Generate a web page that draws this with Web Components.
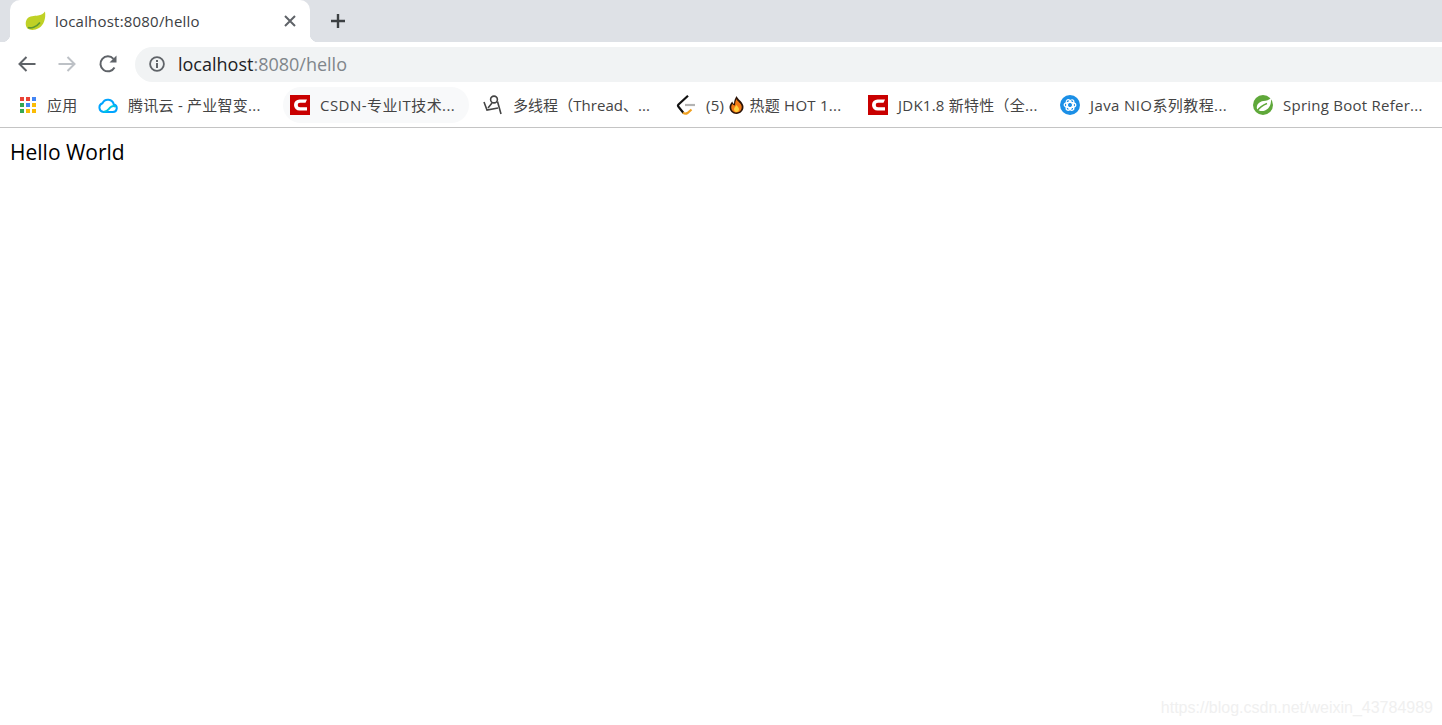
<!DOCTYPE html>
<html lang="zh">
<head>
<meta charset="utf-8">
<title>localhost:8080/hello</title>
<style>
  html, body { margin: 0; height: 100%; background: #fff; }
  body { font-family: "Open Sans", "Noto Sans CJK SC", sans-serif; overflow: hidden; }
  svg { display: block; }
</style>
</head>
<body>
<browser-window>
  <tab-strip title-text="localhost:8080/hello"></tab-strip>
  <nav-toolbar></nav-toolbar>
  <bookmark-bar>
    <bookmark-item style="width:79px">
      <svg slot="icon" width="18" height="18" viewBox="0 0 18 18">
        <rect x="1" y="1" width="4" height="4" fill="#ea4335"/><rect x="7" y="1" width="4" height="4" fill="#ea4335"/><rect x="13" y="1" width="4" height="4" fill="#4285f4"/>
        <rect x="1" y="7" width="4" height="4" fill="#34a853"/><rect x="7" y="7" width="4" height="4" fill="#4285f4"/><rect x="13" y="7" width="4" height="4" fill="#fbbc05"/>
        <rect x="1" y="13" width="4" height="4" fill="#34a853"/><rect x="7" y="13" width="4" height="4" fill="#fbbc05"/><rect x="13" y="13" width="4" height="4" fill="#fbbc05"/>
      </svg>
      应用
    </bookmark-item>
    <bookmark-item style="width:192px">
      <svg slot="icon" width="20" height="20" viewBox="0 0 20 20" fill="none" stroke-width="2">
        <path d="M5.500 17H15a3.800 3.800 0 0 0 .8-7.500 6 6 0 0 0-11.400-1.200A4.500 4.500 0 0 0 5.500 17z" stroke="#00a4ff"/>
        <path d="M5.500 17c3 0 4-1.500 6-3.800 1.800-2.200 4-2.700 6.200-1.500" stroke="#00c8e0"/>
      </svg>
      腾讯云 - 产业智变...
    </bookmark-item>
    <bookmark-item hovered style="width:186px;letter-spacing:.45px">
      <svg slot="icon" width="20" height="20" viewBox="0 0 20 20">
        <rect width="20" height="20" fill="#c90000"/>
        <path d="M17 4.500H9.500a5.500 5.500 0 0 0 0 11H17v-3.200h-7a2.300 2.300 0 0 1 0-4.600h5.500z" fill="#fff"/>
      </svg>
      CSDN-专业IT技术...
    </bookmark-item>
    <bookmark-item style="width:193px;margin-left:7px;letter-spacing:.05px">
      <svg slot="icon" width="20" height="20" viewBox="0 0 20 20" fill="none" stroke="#444" stroke-width="1.600">
        <circle cx="11" cy="4.500" r="3.400"/>
        <path d="M1 7l3 8 11-2M5 13l4-5M14.500 6.500 18 19"/>
      </svg>
      多线程（Thread、...
    </bookmark-item>
    <bookmark-item style="width:192px">
      <svg slot="icon" width="20" height="20" viewBox="0 0 20 20" fill="none" stroke-width="2.200">
        <path d="M12 .8 2.500 9.500a1.600 1.600 0 0 0 0 2.200L7.500 18" stroke="#111"/>
        <path d="M9 10h10" stroke="#b3b3b3"/>
        <path d="M7 17.500c1.500 1.500 3 1.500 4.500.5l4-3.500" stroke="#f0a020"/>
      </svg>
      (5) <svg width="15" height="18" viewBox="0 0 15 18" style="display:inline-block;vertical-align:-3px;margin:0 1px">
        <path d="M7.500 0c1 3 5.500 5 6.800 9.500C15.300 14 12 18 7.500 18S-.3 14 .7 9.800C1.300 7.800 2.500 6.500 3.300 5.500c.3 1.300.8 2 1.700 2.400C5 5 6 2.500 7.500 0z" fill="#2b1408"/>
        <path d="M7.500 3c.8 2.500 4.800 4 5.200 7.500.3 3-2 6-5.200 6s-5.700-2.600-5.200-6c.2-1 .6-1.900 1.200-2.700.5 1 1.300 1.500 2.500 1.700C6 7 6.500 5 7.500 3z" fill="#f47b16"/>
        <path d="M7.500 9c.8 1.500 2.500 2.200 2.500 4.200 0 1.600-1.100 2.800-2.500 2.800S5 14.800 5 13.200C5 11.300 6.700 10.500 7.500 9z" fill="#ffd23e"/>
      </svg> 热题 HOT 1...
    </bookmark-item>
    <bookmark-item style="width:192px">
      <svg slot="icon" width="20" height="20" viewBox="0 0 20 20">
        <rect width="20" height="20" fill="#c90000"/>
        <path d="M17 4.500H9.500a5.500 5.500 0 0 0 0 11H17v-3.200h-7a2.300 2.300 0 0 1 0-4.600h5.500z" fill="#fff"/>
      </svg>
      JDK1.8 新特性（全...
    </bookmark-item>
    <bookmark-item style="width:193px;letter-spacing:.4px">
      <svg slot="icon" width="20" height="20" viewBox="0 0 20 20">
        <circle cx="10" cy="10" r="10" fill="#1b8fe6"/>
        <g fill="none" stroke="#fff" stroke-width="1.300">
          <ellipse cx="10" cy="10" rx="5.800" ry="2.600"/>
          <ellipse cx="10" cy="10" rx="5.800" ry="2.600" transform="rotate(60 10 10)"/>
          <ellipse cx="10" cy="10" rx="5.800" ry="2.600" transform="rotate(120 10 10)"/>
        </g>
      </svg>
      Java NIO系列教程...
    </bookmark-item>
    <bookmark-item style="width:190px">
      <svg slot="icon" width="20" height="20" viewBox="0 0 20 20">
        <circle cx="10" cy="10" r="10" fill="#5fa83a"/>
        <path d="M18 3c.5 5-1 10.500-6 12.500-3 1.200-6.500.5-8-1.500C3 10 6 6.500 10.500 6c3-.3 5.500-1 7.500-3z" fill="#fff"/>
        <path d="M4 16c2.500-3.500 6-6 10-7.500" fill="none" stroke="#5fa83a" stroke-width="1.500"/>
      </svg>
      Spring Boot Refer...
    </bookmark-item>
  </bookmark-bar>
  <page-content>Hello World</page-content>
  <water-mark>https://blog.csdn.net/weixin_43784989</water-mark>
</browser-window>

<script>
class BrowserWindow extends HTMLElement {
  constructor() {
    super();
    this.attachShadow({ mode: "open" }).innerHTML = `
    <style>
      :host { display: flex; flex-direction: column; height: 725px; position: relative; overflow: hidden; }
    </style>
    <slot></slot>`;
  }
}

class TabStrip extends HTMLElement {
  constructor() {
    super();
    this.attachShadow({ mode: "open" });
  }

  connectedCallback() {
    this.shadowRoot.innerHTML = `
    <style>
      :host { display: flex; align-items: stretch; height: 42px; padding-left: 10px; background: #dee1e6; }
      .tab {
        position: relative;
        display: flex;
        align-items: center;
        width: 300px;
        box-sizing: border-box;
        padding: 0 14px 0 15px;
        background: #fff;
        border-radius: 10px 10px 0 0;
      }
      .tab::before, .tab::after {
        content: "";
        position: absolute;
        bottom: 0;
        width: 8px;
        height: 8px;
      }
      .tab::before { left: -8px; background: radial-gradient(circle at 0 0, transparent 8px, #fff 8.5px); }
      .tab::after { right: -8px; background: radial-gradient(circle at 100% 0, transparent 8px, #fff 8.5px); }
      .title { flex: 1; margin-left: 9px; font-size: 15px; letter-spacing: .2px; color: #3c4043; white-space: nowrap; }
      .plus { margin-left: 20px; align-self: center; }
    </style>
    <div class="tab">
      <svg width="21" height="20" viewBox="0 0 21 20">
        <path d="M20 .5C21 7 19 14 14 17c-4 2.500-9 2.500-11.500.5C.5 15 0 11 2 8c3-3.500 7-3 11-3.500 3-.5 5.500-1.500 7-4z" fill="#bfd125"/>
        <path d="M3 16.500c3 1 8 0 12-5" fill="none" stroke="#5e9a32" stroke-width="1.600"/>
      </svg>
      <span class="title">${this.getAttribute("title-text")}</span>
      <svg width="12" height="12" viewBox="0 0 12 12" stroke="#5f6368" stroke-width="2"><path d="M1 1l10 10M11 1 1 11"/></svg>
    </div>
    <svg class="plus" width="16" height="16" viewBox="0 0 16 16" stroke="#3c4043" stroke-width="2.400"><path d="M8 1v14M1 8h14"/></svg>`;
  }
}

class NavToolbar extends HTMLElement {
  constructor() {
    super();
    this.attachShadow({ mode: "open" }).innerHTML = `
    <style>
      :host { display: flex; align-items: center; height: 44px; padding-left: 17px; box-sizing: border-box; background: #fff; }
      .btn { flex: none; }
      .back { margin-right: 20px; }
      .fwd { margin-right: 21px; }
      .reload { margin-right: 17px; }
      .omni {
        flex: 1;
        display: flex;
        align-items: center;
        height: 35px;
        margin-right: -40px;
        padding-left: 14px;
        background: #f1f3f4;
        border-radius: 18px;
        font-size: 18px;
        color: #80868b;
      }
      .omni b { font-weight: 400; color: #202124; }
      .omni svg { margin-right: 13px; }
    </style>
    <svg class="btn back" width="20" height="18" viewBox="0 0 20 18" fill="none" stroke="#5f6368" stroke-width="2"><path d="M18.500 9H2.500M9.500 2l-7 7 7 7"/></svg>
    <svg class="btn fwd" width="20" height="18" viewBox="0 0 20 18" fill="none" stroke="#bdc1c6" stroke-width="2"><path d="M1.500 9h16M10.500 2l7 7-7 7"/></svg>
    <svg class="btn reload" width="20" height="20" viewBox="0 0 20 20" fill="none">
      <path d="M16.500 13.500A7.500 7.500 0 1 1 15.500 4.800" stroke="#5f6368" stroke-width="2"/>
      <path d="M18.500 1.500v7h-7z" fill="#5f6368"/>
    </svg>
    <div class="omni">
      <svg width="16" height="16" viewBox="0 0 16 16" fill="none">
        <circle cx="8" cy="8" r="6.900" stroke="#5f6368" stroke-width="1.800"/>
        <path d="M7 7h2v5H7zM7 4h2v2H7z" fill="#5f6368"/>
      </svg>
      <span><b>localhost</b>:8080/hello</span>
    </div>`;
  }
}

class BookmarkBar extends HTMLElement {
  constructor() {
    super();
    this.attachShadow({ mode: "open" }).innerHTML = `
    <style>
      :host { display: flex; align-items: center; height: 42px; box-sizing: border-box; padding: 0 0 4px 12px; background: #fff; border-bottom: 1px solid #c4c4c4; }
    </style>
    <slot></slot>`;
  }
}

class BookmarkItem extends HTMLElement {
  constructor() {
    super();
    this.attachShadow({ mode: "open" }).innerHTML = `
    <style>
      :host {
        display: flex;
        align-items: center;
        flex: none;
        gap: 10px;
        height: 36px;
        box-sizing: border-box;
        padding-left: 7px;
        border-radius: 18px;
        font-size: 15px;
        letter-spacing: .25px;
        color: #444;
        white-space: nowrap;
      }
      :host([hovered]) { background: #f8f9fa; }
      .label { display: block; }
    </style>
    <slot name="icon"></slot>
    <span class="label"><slot></slot></span>`;
  }
}

class PageContent extends HTMLElement {
  constructor() {
    super();
    this.attachShadow({ mode: "open" }).innerHTML = `
    <style>
      :host { display: block; flex: 1; padding: 9px 10px; font-size: 21px; line-height: 30px; color: #000; background: #fff; }
    </style>
    <slot></slot>`;
  }
}

class WaterMark extends HTMLElement {
  constructor() {
    super();
    this.attachShadow({ mode: "open" }).innerHTML = `
    <style>
      :host { position: absolute; right: 9px; bottom: 8px; font: 16px "Liberation Sans", sans-serif; color: #f0f0f0; white-space: nowrap; }
    </style>
    <slot></slot>`;
  }
}

customElements.define("browser-window", BrowserWindow);
customElements.define("tab-strip", TabStrip);
customElements.define("nav-toolbar", NavToolbar);
customElements.define("bookmark-bar", BookmarkBar);
customElements.define("bookmark-item", BookmarkItem);
customElements.define("page-content", PageContent);
customElements.define("water-mark", WaterMark);
</script>
</body>
</html>
